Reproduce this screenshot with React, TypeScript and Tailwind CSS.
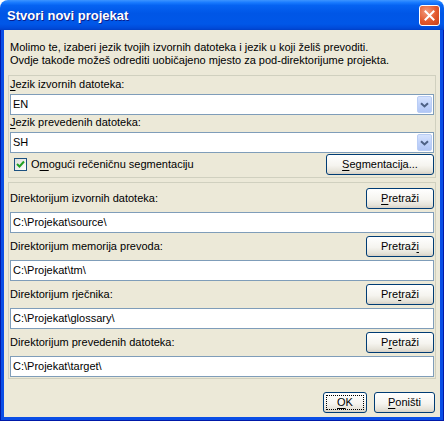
import type { ReactNode } from "react";

function Mn({ children }: { children: ReactNode }) {
  return <span className="underline decoration-1 underline-offset-[2px]">{children}</span>;
}

function XpButton({
  children,
  className = "",
  focused = false,
}: {
  children: ReactNode;
  className?: string;
  focused?: boolean;
}) {
  return (
    <button
      type="button"
      className={`relative flex h-[21px] shrink-0 items-center justify-center rounded-[3px] border border-[#003c74] bg-[linear-gradient(to_bottom,#ffffff,#f5f4ef_55%,#e6e3d9_85%,#d6d0c5)] text-[11px] leading-none text-black ${className}`}
    >
      {focused && <span className="absolute inset-[2px] border border-dotted border-black" />}
      <span className="relative">{children}</span>
    </button>
  );
}

function Combo({ value }: { value: string }) {
  return (
    <div className="flex h-[21px] items-center border border-[#7f9db9] bg-white pl-[2px]">
      <span className="flex-1 leading-none">{value}</span>
      <span className="m-[1px] flex h-[17px] w-[15px] items-center justify-center rounded-[2px] border border-[#b9cdf5] bg-[linear-gradient(to_bottom,#d6e3fd,#c1d3fb_50%,#b1c6f5)]">
        <svg width="9" height="6" viewBox="0 0 9 6">
          <path d="M1 1.2 L4.5 4.5 L8 1.2" fill="none" stroke="#4d6185" strokeWidth="2" />
        </svg>
      </span>
    </div>
  );
}

function PathField({ value }: { value: string }) {
  return (
    <div className="flex h-[21px] items-center border border-[#7f9db9] bg-white pl-[2px] leading-none">
      {value}
    </div>
  );
}

function DirRow({ label, button, path }: { label: string; button: ReactNode; path: string }) {
  return (
    <div className="flex flex-col gap-[3px]">
      <div className="flex h-[21px] items-center justify-between">
        <span>{label}</span>
        <XpButton className="w-[68px]">{button}</XpButton>
      </div>
      <PathField value={path} />
    </div>
  );
}

export default function App() {
  return (
    <div className="flex h-[421px] w-[444px] flex-col bg-white font-['Liberation_Sans',Arial,sans-serif] text-[11px] leading-[13px] text-black">
      <div className="relative flex h-[30px] shrink-0 items-center rounded-t-[8px] bg-[linear-gradient(to_bottom,#3d95ff_0%,#1a7cff_8%,#0563f2_18%,#0056e6_45%,#0057e8_80%,#004ad9_94%,#003fc6_100%)] pl-[7px]">
        <span className="text-[13px] font-bold leading-none text-white [text-shadow:1px_1px_0_#0a1e8c]">
          Stvori novi projekat
        </span>
        <div className="absolute right-[4px] top-[5px] flex h-[21px] w-[21px] items-center justify-center rounded-[3px] border border-white bg-[radial-gradient(circle_at_35%_30%,#f39a7c,#e2582c_55%,#c8401a)]">
          <svg width="11" height="11" viewBox="0 0 11 11">
            <path d="M1.5 1.5 L9.5 9.5 M9.5 1.5 L1.5 9.5" stroke="#ffffff" strokeWidth="2" strokeLinecap="square" />
          </svg>
        </div>
      </div>

      <div className="flex flex-1 flex-col border-x border-b border-[#0019a8]">
        <div className="flex flex-1 flex-col border-x-[3px] border-b-[3px] border-[#0a4ee6]">
          <div className="flex flex-1 flex-col bg-[#ece9d8]">
            <div className="px-[6px] pt-[11px]">
              <p>Molimo te, izaberi jezik tvojih izvornih datoteka i jezik u koji želiš prevoditi.</p>
              <p>Ovdje takođe možeš odrediti uobičajeno mjesto za pod-direktorijume projekta.</p>
            </div>

            <div className="mx-[4px] mt-[8px] border border-[#d0d0bf] px-[1px] pb-[2px] pt-[2px]">
              <div className="h-[13px]">
                <Mn>J</Mn>ezik izvornih datoteka:
              </div>
              <div className="mt-[3px]">
                <Combo value="EN" />
              </div>
              <div className="mt-[1px] h-[13px]">
                <Mn>J</Mn>ezik prevedenih datoteka:
              </div>
              <div className="mt-[3px]">
                <Combo value="SH" />
              </div>
              <div className="mt-[1px] flex h-[21px] items-center justify-between">
                <label className="flex items-center gap-[4px] pl-[4px]">
                  <span className="flex h-[13px] w-[13px] items-center justify-center border border-[#1c5180] bg-[linear-gradient(135deg,#dcdcd7,#ffffff)]">
                    <svg width="9" height="9" viewBox="0 0 9 9">
                      <path d="M1 4 L3.5 6.5 L8 1.5" fill="none" stroke="#21a121" strokeWidth="2" />
                    </svg>
                  </span>
                  <span>
                    O<Mn>m</Mn>ogući rečeničnu segmentaciju
                  </span>
                </label>
                <XpButton className="w-[108px]">
                  <Mn>S</Mn>egmentacija...
                </XpButton>
              </div>
            </div>

            <div className="mx-[4px] mt-[4px] flex flex-col gap-[3px] border border-[#d0d0bf] px-[1px] pb-[1px] pt-[5px]">
              <DirRow
                label="Direktorijum izvornih datoteka:"
                button={
                  <>
                    <Mn>P</Mn>retraži
                  </>
                }
                path="C:\Projekat\source\"
              />
              <DirRow
                label="Direktorijum memorija prevoda:"
                button={
                  <>
                    Pretraž<Mn>i</Mn>
                  </>
                }
                path="C:\Projekat\tm\"
              />
              <DirRow
                label="Direktorijum rječnika:"
                button={
                  <>
                    Pre<Mn>t</Mn>raži
                  </>
                }
                path="C:\Projekat\glossary\"
              />
              <DirRow
                label="Direktorijum prevedenih datoteka:"
                button={
                  <>
                    P<Mn>r</Mn>etraži
                  </>
                }
                path="C:\Projekat\target\"
              />
            </div>

            <div className="mt-[13px] flex justify-end gap-[7px] pr-[5px]">
              <XpButton className="w-[44px]" focused>
                <Mn>O</Mn>K
              </XpButton>
              <XpButton className="w-[61px]">
                <Mn>P</Mn>oništi
              </XpButton>
            </div>
          </div>
        </div>
      </div>
    </div>
  );
}
